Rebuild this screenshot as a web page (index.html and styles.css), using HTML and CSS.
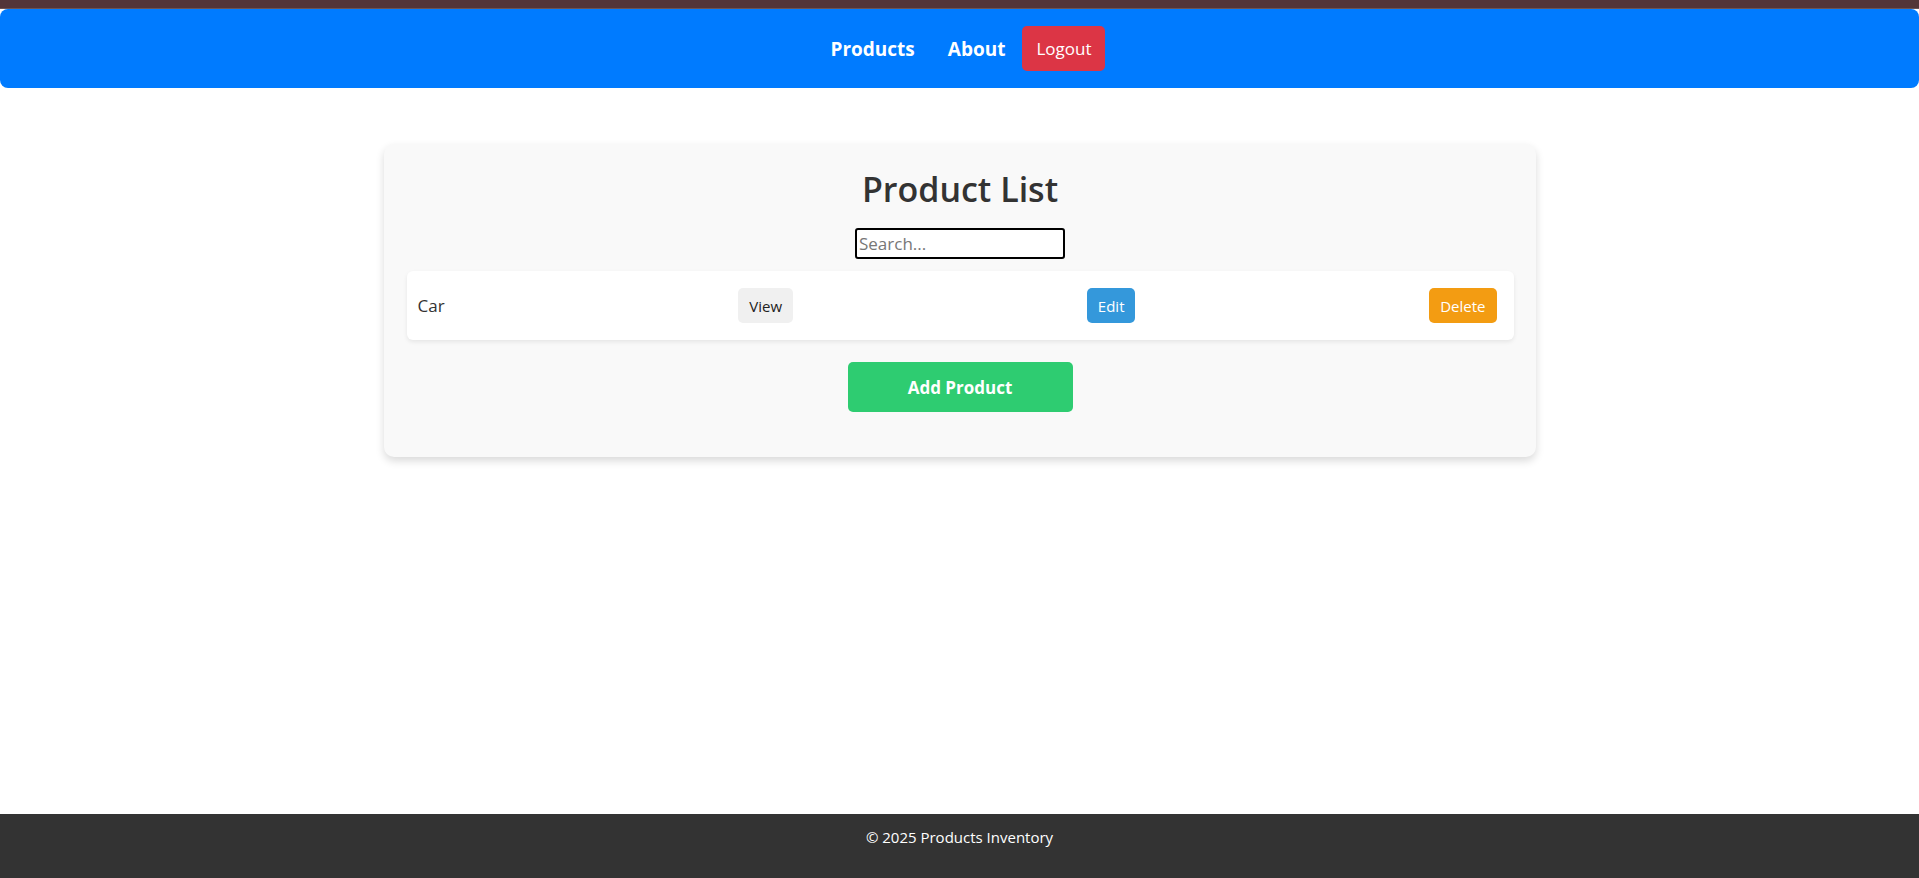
FILE: index.html
```html
<!DOCTYPE html>
<html lang="en">
<head>
<meta charset="utf-8">
<title>Products Inventory</title>
<link rel="stylesheet" href="styles.css">
</head>
<body>
<div class="top-strip"></div>
<nav class="navbar">
  <div class="nav-inner">
    <a class="nav-link nav-products" href="#">Products</a>
    <a class="nav-link nav-about" href="#">About</a>
    <button class="logout" type="button">Logout</button>
  </div>
</nav>
<main class="main">
  <section class="card">
    <h1 class="title">Product List</h1>
    <input class="search" type="text" placeholder="Search...">
    <ul class="list">
      <li class="item">
        <span class="item-name">Car</span>
        <button class="btn btn-view" type="button">View</button>
        <button class="btn btn-edit" type="button">Edit</button>
        <button class="btn btn-delete" type="button">Delete</button>
      </li>
    </ul>
    <button class="add" type="button">Add Product</button>
  </section>
</main>
<footer class="footer">© 2025 Products Inventory</footer>
</body>
</html>
```
FILE: styles.css
```css
* { box-sizing: border-box; }
html, body { margin: 0; padding: 0; }
body {
  font-family: "Open Sans", "Noto Sans", sans-serif;
  color: #333;
  background: #fff;
  min-height: 878px;
  display: flex;
  flex-direction: column;
}
.top-strip {
  height: 9px;
  background: #533539;
  border-bottom: 1px solid #6b5558;
}
.navbar {
  height: 79px;
  background: #007bff;
  border-radius: 8px;
  display: flex;
  align-items: center;
  justify-content: center;
  padding-left: 17px;
}
.nav-inner {
  display: flex;
  align-items: center;
}
.nav-link {
  color: #fff;
  text-decoration: none;
  font-weight: 700;
  font-size: 19px;
}
.nav-products { margin-right: 33px; }
.nav-about { margin-right: 17px; }
.logout {
  background: #dc3545;
  color: #fff;
  border: none;
  border-radius: 5px;
  font-family: inherit;
  font-size: 17px;
  height: 45px;
  padding: 0 14px;
}
.main {
  flex: 1;
  padding-top: 56px;
  display: flex;
  justify-content: center;
  align-items: flex-start;
}
.card {
  width: 1152px;
  background: #f9f9f9;
  border-radius: 10px;
  box-shadow: 0 4px 8px rgba(0, 0, 0, 0.15);
  padding: 21px 22px 45px 23px;
  display: flex;
  flex-direction: column;
  align-items: center;
}
.title {
  margin: 0;
  font-size: 34px;
  line-height: 48px;
  font-weight: 600;
  color: #333;
}
.search {
  margin-top: 15px;
  width: 210px;
  height: 31px;
  border: 2px solid #000;
  border-radius: 3px;
  font-family: inherit;
  font-size: 17px;
  padding: 0 2px;
  background: #fff;
}
.search::placeholder { color: #777; }
.list {
  list-style: none;
  margin: 12px 0 0;
  padding: 0;
  align-self: stretch;
}
.item {
  height: 69px;
  background: #fff;
  border-radius: 6px;
  box-shadow: 0 2px 4px rgba(0, 0, 0, 0.08);
  display: flex;
  align-items: center;
  justify-content: space-between;
  padding: 0 17px 0 11px;
}
.item-name { font-size: 17px; color: #333; }
.btn {
  height: 35px;
  padding: 0 11px;
  border: none;
  border-radius: 5px;
  font-family: inherit;
  font-size: 15px;
}
.btn-view { background: #f0f0f0; color: #222; }
.btn-edit { background: #3498db; color: #fff; }
.btn-delete { background: #f39c12; color: #fff; }
.add {
  margin-top: 22px;
  width: 225px;
  height: 50px;
  background: #2ecc71;
  color: #fff;
  border: none;
  border-radius: 5px;
  font-family: inherit;
  font-weight: 700;
  font-size: 17px;
}
.footer {
  height: 64px;
  background: #333;
  color: #fff;
  text-align: center;
  font-size: 15px;
  line-height: 22px;
  padding-top: 12px;
}
```
